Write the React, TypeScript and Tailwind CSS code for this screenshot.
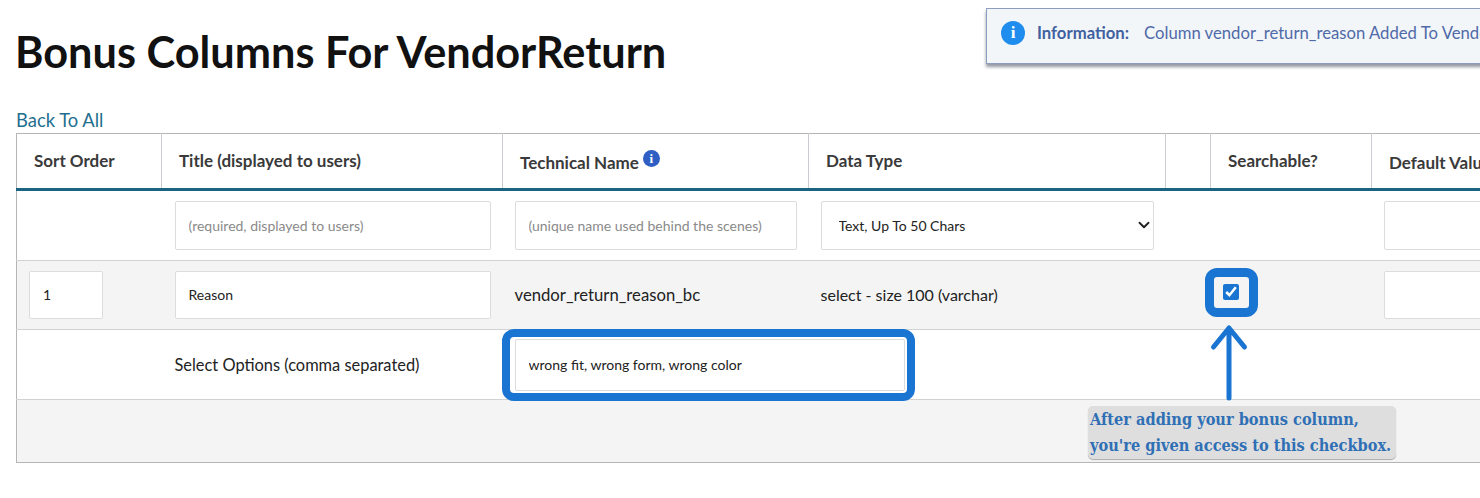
import { ChevronDown } from "lucide-react";

const inputClass =
  "h-12 w-full rounded-[2px] border border-[#dcdcdc] bg-white px-[13px] pb-px text-[14px] text-[#222] placeholder:text-[#8a8a8a] outline-none";

const thClass =
  "h-[56px] border-r border-[#c9cdd1] px-[17px] text-left align-middle text-[17px] font-bold text-[#3a3a3a]";

const App = () => {
  return (
    <div className="relative h-[498px] w-[1480px] overflow-hidden bg-white font-['Lato',sans-serif]">
      <div className="px-4 pt-[27px]">
        <h1 className="-ml-px text-[43.300px] leading-[48px] font-bold text-[#111]">Bonus Columns For VendorReturn</h1>
        <a className="mt-[33px] block text-[18.400px] leading-6 text-[#1f6f8f]">Back To All</a>

        <table className="mt-px w-[1700px] table-fixed border-collapse border border-[#b5b5b5] text-[17px] text-[#222]">
          <colgroup>
            <col className="w-[145px]" />
            <col className="w-[341px]" />
            <col className="w-[306px]" />
            <col className="w-[357px]" />
            <col className="w-[45px]" />
            <col className="w-[161px]" />
            <col className="w-[345px]" />
          </colgroup>
          <thead>
            <tr className="border-b-[3px] border-[#1a6482]">
              <th className={thClass}>Sort Order</th>
              <th className={thClass}>Title (displayed to users)</th>
              <th className={thClass}>
                <span className="relative top-0.5">Technical Name</span>
                <span className="relative -top-[4px] ml-[4px] inline-flex h-[17px] w-[17px] items-center justify-center rounded-full bg-[#2f5fc4] align-middle font-['Liberation_Serif',serif] text-[13px] text-white">
                  i
                </span>
              </th>
              <th className={thClass}>Data Type</th>
              <th className={thClass}></th>
              <th className={thClass}>Searchable?</th>
              <th className={thClass}>
                <span className="relative top-0.5">Default Value</span>
              </th>
            </tr>
          </thead>
          <tbody>
            <tr className="h-[71px] border-b border-[#d2d2d2]">
              <td></td>
              <td className="pr-3 pl-[13px]">
                <input className={`${inputClass} h-[49px]`} placeholder="(required, displayed to users)" />
              </td>
              <td className="px-3">
                <input className={`${inputClass} h-[49px]`} placeholder="(unique name used behind the scenes)" />
              </td>
              <td className="px-3">
                <div className="relative">
                  <select className={`${inputClass} h-[49px] appearance-none pl-[17px] text-[13.400px]`} defaultValue="text50">
                    <option value="text50">Text, Up To 50 Chars</option>
                  </select>
                  <ChevronDown className="absolute top-[15px] right-[1px] h-[18px] w-[18px] text-[#222]" strokeWidth={2.5} />
                </div>
              </td>
              <td></td>
              <td></td>
              <td className="px-3">
                <input className={`${inputClass} h-[49px]`} />
              </td>
            </tr>
            <tr className="h-[69px] border-b border-[#d2d2d2] bg-[#f4f4f4]">
              <td className="pr-[59px] pl-3">
                <input className={inputClass} defaultValue="1" />
              </td>
              <td className="pr-3 pl-[13px]">
                <input className={inputClass} defaultValue="Reason" />
              </td>
              <td className="px-3 pt-0.5 text-[16.700px]">vendor_return_reason_bc</td>
              <td className="px-3 text-[16px]">select - size 100 (varchar)</td>
              <td></td>
              <td>
                <div className="relative -top-[3px] ml-[12px] flex h-[16px] w-[16px] items-center justify-center">
                  <input type="checkbox" defaultChecked className="h-4 w-4 accent-[#1a75d2]" />
                  <span className="absolute -top-[16px] -right-[19px] -bottom-[17px] -left-[18px] rounded-[12px] border-[9px] border-[#1a75d2]"></span>
                </div>
              </td>
              <td className="px-3">
                <input className={inputClass} />
              </td>
            </tr>
            <tr className="h-[70px] border-b border-[#d2d2d2]">
              <td></td>
              <td className="px-[13px] pt-0.5 text-[16.400px]">Select Options (comma separated)</td>
              <td colSpan={2} className="pr-[260px] pl-3">
                <div className="relative w-[390px]">
                  <input className={`${inputClass} h-[52px]`} defaultValue="wrong fit, wrong form, wrong color" />
                  <span className="absolute -top-[10px] -right-[10px] -bottom-[10px] -left-[13px] rounded-[12px] border-[8px] border-[#1a75d2]"></span>
                </div>
              </td>
              <td colSpan={3}></td>
            </tr>
            <tr className="h-[63px] bg-[#f4f4f4]">
              <td colSpan={7}></td>
            </tr>
          </tbody>
        </table>
      </div>

      {/* notification */}
      <div className="absolute top-2 left-[986px] flex h-[56px] w-[700px] items-center border border-[#8d9dbd] bg-[#f3f6f9] pb-[6px] pl-[14px] text-[16.700px] text-[#4f6aa8] shadow-[0_3px_3px_rgba(60,70,90,0.55)]">
        <span className="flex h-6 w-6 items-center justify-center rounded-full bg-[#1f8ded] font-['Liberation_Serif',serif] text-[17px] font-bold text-white">i</span>
        <span className="ml-3 pt-0.5 font-bold text-[#41609f]">Information:</span>
        <span className="ml-[15px] pt-0.5 whitespace-nowrap">Column vendor_return_reason Added To VendorReturn</span>
      </div>

      {/* annotation arrow */}
      <svg className="absolute top-[320px] left-[1205px]" width="48" height="84" viewBox="0 0 48 84" fill="none">
        <path d="M24 8V78M8.500 27L24 8L39.500 27" stroke="#1a75d2" strokeWidth="5" strokeLinecap="round" strokeLinejoin="round" />
      </svg>

      {/* annotation callout */}
      <div className="absolute top-[406px] left-[1088px] h-[53px] w-[308px] rounded-[5px] bg-[#dedede] pt-px pl-[2px] font-['DejaVu_Serif',serif] text-[16.200px] leading-[26px] font-bold whitespace-nowrap text-[#2f6fb5] shadow-[0_1px_1px_rgba(0,0,0,0.3)] [font-stretch:condensed]">
        After adding your bonus column,
        <br />
        you're given access to this checkbox.
      </div>
    </div>
  );
};

export default App;
